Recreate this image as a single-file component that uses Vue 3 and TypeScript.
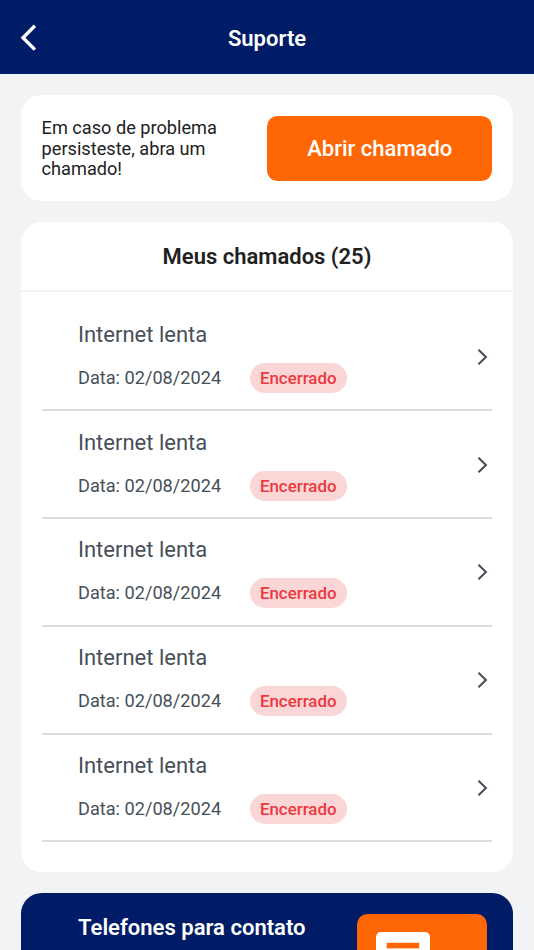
<script setup lang="ts">
interface Ticket {
  id: number
  title: string
  date: string
  status: string
}

const total = 25
const tickets: Ticket[] = Array.from({ length: 5 }, (_, i) => ({
  id: i + 1,
  title: 'Internet lenta',
  date: '02/08/2024',
  status: 'Encerrado',
}))
</script>

<template>
  <div class="screen">
    <header class="topbar">
      <button class="back" type="button" aria-label="Voltar">
        <svg width="17" height="27" viewBox="0 0 17 27" fill="none">
          <path d="M14.9 1.8 L3 13.7 L14.9 25.6" stroke="#fff" stroke-width="3.4" />
        </svg>
      </button>
      <h1>Suporte</h1>
    </header>

    <main class="content">
      <section class="card request">
        <p>Em caso de problema persisteste, abra um chamado!</p>
        <button class="open" type="button">Abrir chamado</button>
      </section>

      <section class="card tickets">
        <h2>Meus chamados ({{ total }})</h2>
        <ul>
          <li v-for="ticket in tickets" :key="ticket.id">
            <div class="info">
              <h3>{{ ticket.title }}</h3>
              <div class="meta">
                <span class="date">Data: {{ ticket.date }}</span>
                <span class="status">{{ ticket.status }}</span>
              </div>
            </div>
            <svg class="chevron" width="12" height="18" viewBox="0 0 12 18" fill="none">
              <path d="M1.5 1.8 L8.9 9 L1.5 16.2" stroke="#475059" stroke-width="2.1" />
            </svg>
          </li>
        </ul>
      </section>

      <section class="phones">
        <h2>Telefones para contato</h2>
        <div class="tile">
          <svg width="54" height="60" viewBox="0 0 54 60">
            <rect width="54" height="60" rx="5" fill="#fff" />
            <rect x="10.7" y="10.8" width="32.5" height="5.6" fill="#ff6604" />
          </svg>
        </div>
      </section>
    </main>
  </div>
</template>

<style>
body {
  margin: 0;
  overflow: hidden;
}
</style>

<style scoped>
.screen {
  box-sizing: border-box;
  height: 950px;
  overflow: hidden;
  background: #f2f3f5;
  font-family: Roboto, "Liberation Sans", sans-serif;
  color: #212121;
}
h1, h2, h3, p, ul {
  margin: 0;
  padding: 0;
}
button {
  border: 0;
  padding: 0;
  font-family: inherit;
}
.topbar {
  display: grid;
  grid-template-columns: 40px 1fr 40px;
  align-items: center;
  box-sizing: border-box;
  height: 74.2px;
  padding: 0 20px;
  background: #001c66;
  color: #fff;
}
.back {
  display: flex;
  padding-top: 1px;
  background: none;
}
h1 {
  padding-top: 2.9px;
  text-align: center;
  font-size: 22px;
  font-weight: 600;
  line-height: 26px;
}
.content {
  display: flex;
  flex-direction: column;
  gap: 20.8px;
  padding: 20.8px 20.8px 0;
}
.card {
  border-radius: 20.8px;
  background: #fff;
}
.request {
  display: flex;
  align-items: center;
  justify-content: space-between;
  box-sizing: border-box;
  height: 106.2px;
  padding: 0 20.8px;
}
.request p {
  width: 190px;
  padding-top: 2px;
  font-size: 18.17px;
  line-height: 20.7px;
}
.open {
  width: 225.2px;
  height: 65px;
  border-radius: 10.4px;
  background: #ff6604;
  color: #fff;
  font-size: 22px;
  font-weight: 500;
}
.tickets {
  box-sizing: border-box;
  height: 650.4px;
}
.tickets h2 {
  box-sizing: border-box;
  height: 70px;
  padding-top: 1px;
  border-bottom: 2.6px solid #f2f3f5;
  text-align: center;
  font-size: 22px;
  font-weight: 600;
  line-height: 67.4px;
}
ul {
  padding: 11.5px 20.8px 0;
  list-style: none;
}
li {
  display: flex;
  align-items: center;
  justify-content: space-between;
  box-sizing: border-box;
  height: 107.8px;
  padding: 1px 3.6px 0 36.4px;
  border-bottom: 2px solid #d9dde1;
}
.info {
  padding-top: 1px;
  color: #475059;
}
h3 {
  font-size: 22px;
  font-weight: 400;
  line-height: 26px;
}
.meta {
  display: flex;
  align-items: center;
  gap: 28.4px;
  margin-top: 15px;
}
.date {
  font-size: 18.17px;
  line-height: 22px;
}
.status {
  padding: 0 10.4px;
  border-radius: 15px;
  background: #fad6d6;
  color: #eb3941;
  font-size: 16.9px;
  font-weight: 500;
  line-height: 30px;
}
.phones {
  display: flex;
  justify-content: space-between;
  box-sizing: border-box;
  height: 180px;
  padding: 20.8px 26px 0 57.2px;
  border-radius: 20.8px;
  background: #001c66;
  color: #fff;
}
.phones h2 {
  font-size: 22.05px;
  font-weight: 600;
  line-height: 27px;
}
.tile {
  box-sizing: border-box;
  width: 129.8px;
  height: 130px;
  padding: 18.2px;
  border-radius: 10.4px;
  background: #ff6604;
}
</style>
